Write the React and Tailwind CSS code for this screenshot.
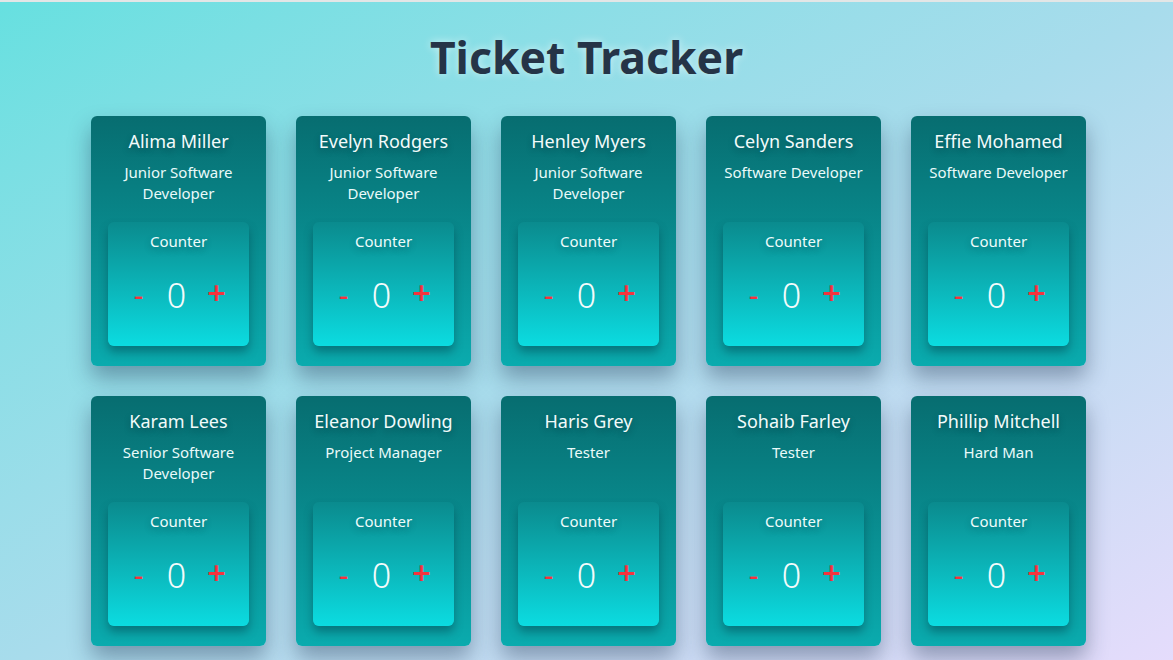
import { useState } from "react";

const people = [
  { name: "Alima Miller", role: "Junior Software Developer" },
  { name: "Evelyn Rodgers", role: "Junior Software Developer" },
  { name: "Henley Myers", role: "Junior Software Developer" },
  { name: "Celyn Sanders", role: "Software Developer" },
  { name: "Effie Mohamed", role: "Software Developer" },
  { name: "Karam Lees", role: "Senior Software Developer" },
  { name: "Eleanor Dowling", role: "Project Manager" },
  { name: "Haris Grey", role: "Tester" },
  { name: "Sohaib Farley", role: "Tester" },
  { name: "Phillip Mitchell", role: "Hard Man" },
];

const Counter = () => {
  const [count, setCount] = useState(0);

  return (
    <div className="mt-auto flex h-[124px] flex-col items-center rounded-md bg-gradient-to-b from-[#0a8b8e] to-[#0bdce1] pt-[9px] shadow-[0_6px_10px_rgba(0,60,70,0.45)]">
      <p className="text-[15px] leading-5 text-[#eefcfc] [text-shadow:0_3px_6px_rgba(0,40,50,0.35)]">Counter</p>
      <div className="mt-[27px] flex items-center gap-[18px]">
        <button onClick={() => setCount(count - 1)} className="w-4 text-[30px] leading-none text-[#f5333d]">-</button>
        <span className="w-6 text-center text-[34px] font-light leading-none text-[#f3fbfb]">{count}</span>
        <button onClick={() => setCount(count + 1)} className="-mt-[6px] w-5 text-[33px] font-semibold leading-none text-[#f5333d]">+</button>
      </div>
    </div>
  );
};

const PersonCard = ({ person }) => (
  <div className="flex h-[250px] w-[175px] shrink-0 flex-col rounded-md bg-gradient-to-b from-[#076d70] to-[#0aabae] px-[17px] pb-5 pt-[13px] text-center shadow-[0_12px_22px_rgba(30,50,80,0.4)]">
    <h2 className="whitespace-nowrap text-[18px] leading-6 text-[#f2fbfb] [text-shadow:0_3px_6px_rgba(0,30,40,0.35)]">{person.name}</h2>
    <p className="mt-[9px] text-[15px] leading-[21px] text-[#eafafa]">{person.role}</p>
    <Counter />
  </div>
);

const App = () => {
  return (
    <div
      className="min-h-[660px] border-t-2 border-[#e3e6e6] bg-gradient-to-br from-[#66e0e0] via-[#a8dcec] to-[#e6dcfc] pb-6"
      style={{ fontFamily: '"Noto Sans", "Open Sans", sans-serif' }}
    >
      <h1 className="pt-[27px] text-center text-[44.5px] font-bold leading-[56px] text-[#253447] [text-shadow:0_0_8px_rgba(255,255,255,0.6)]">
        Ticket Tracker
      </h1>
      <div className="mt-[31px] flex flex-wrap justify-center gap-[30px] pl-[4px]">
        <div className="grid grid-cols-5 gap-[30px]">
          {people.map((person) => (
            <PersonCard key={person.name} person={person} />
          ))}
        </div>
      </div>
    </div>
  );
};

export default App;
